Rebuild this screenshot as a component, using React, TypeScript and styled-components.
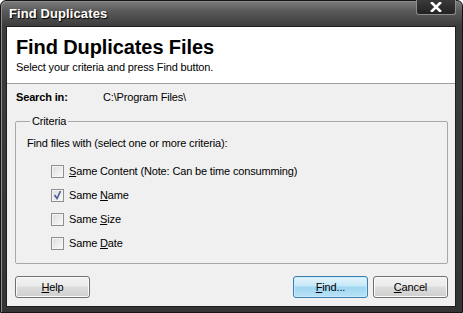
import styled, { createGlobalStyle } from "styled-components";

const GlobalStyle = createGlobalStyle`
  html, body {
    margin: 0;
    padding: 0;
    background: #ffffff;
  }
  body {
    font-family: "Liberation Sans", Arial, sans-serif;
    font-size: 11px;
    letter-spacing: -0.15px;
    color: #000;
  }
`;

// 바깥 창 틀 (어두운 Vista basic 프레임)
const Window = styled.div`
  width: 463px;
  height: 313px;
  box-sizing: border-box;
  display: flex;
  flex-direction: column;
  border: 1px solid #151515;
  border-radius: 6px 6px 0 0;
  background: linear-gradient(
    to bottom,
    #7c7c7c 0px,
    #5a5a5a 10px,
    #3c3c3c 25px,
    #343434 100%
  );
  box-shadow: inset 1px 1px 0 #8a8a8a;
`;

const TitleBar = styled.div`
  height: 25px;
  display: flex;
  justify-content: space-between;
  align-items: flex-start;
  padding-left: 8px;
  padding-right: 6px;
`;

const TitleText = styled.div`
  margin-top: 5px;
  font-size: 13px;
  font-weight: bold;
  color: #ffffff;
  text-shadow: 1px 1px 1px #000;
  letter-spacing: 0.1px;
`;

const CloseButton = styled.div`
  width: 40px;
  height: 15px;
  box-sizing: border-box;
  margin-top: -1px;
  border: 1px solid #8c8c8c;
  border-top: none;
  border-radius: 0 0 3px 3px;
  background: linear-gradient(to bottom, #3a3a3a, #222222);
  display: flex;
  align-items: center;
  justify-content: center;
`;

// 흰 머리글 + 회색 본문
const Client = styled.div`
  flex: 1;
  margin: 0 6px 5px 5px;
  display: flex;
  flex-direction: column;
  background: #f0f0f0;
  border: 1px solid #1e1e1e;
`;

const Header = styled.div`
  height: 57px;
  background: #ffffff;
  border-bottom: 1px solid #a0a0a0;
  padding: 8px 0 0 9px;
  box-sizing: border-box;
`;

const HeaderTitle = styled.div`
  font-size: 20px;
  line-height: 24px;
  font-weight: bold;
  letter-spacing: -0.1px;
`;

const HeaderSub = styled.div`
  margin-top: 2px;
  font-size: 11px;
  line-height: 13px;
`;

const Body = styled.div`
  flex: 1;
  display: flex;
  flex-direction: column;
  padding: 7px 7px 0 8px;
`;

const SearchRow = styled.div`
  display: flex;
  line-height: 13px;
  padding-left: 1px;
`;

const SearchLabel = styled.div`
  width: 87px;
  font-weight: bold;
`;

const GroupBox = styled.fieldset`
  margin: 11px 0 0 0;
  padding: 9px 10px 11px 11px;
  border: 1px solid #a8a8a8;
  border-radius: 2px;
  height: 149px;
  box-sizing: border-box;
`;

const GroupLegend = styled.legend`
  padding: 0 2px;
  margin-left: 3px;
  line-height: 13px;
`;

const Intro = styled.div`
  line-height: 13px;
  margin-bottom: 9px;
`;

const OptionRow = styled.label`
  display: flex;
  align-items: center;
  gap: 5px;
  height: 24px;
  padding-left: 24px;
`;

const Box = styled.span`
  width: 13px;
  height: 13px;
  box-sizing: border-box;
  border: 1px solid #8e8f8f;
  background: linear-gradient(135deg, #dcdcdc 0%, #f4f4f4 80%, #fbfbfb 100%);
  box-shadow: inset 0 0 0 1px #f4f4f4;
  display: flex;
  align-items: center;
  justify-content: center;
`;

const ButtonRow = styled.div`
  display: flex;
  align-items: center;
  gap: 5px;
  margin-top: 12px;
`;

const Spacer = styled.div`
  flex: 1;
`;

const Button = styled.div<{ $default?: boolean }>`
  width: 75px;
  height: 22px;
  box-sizing: border-box;
  border: 1px solid ${(p) => (p.$default ? "#3c7fb1" : "#707070")};
  border-radius: 3px;
  display: flex;
  align-items: center;
  justify-content: center;
  font-size: 11px;
  box-shadow: inset 0 0 0 1px ${(p) => (p.$default ? "#c8ecfc" : "#fbfbfb")};
  background: ${(p) =>
    p.$default
      ? "linear-gradient(to bottom, #e5f4fc 0%, #c6e8f8 45%, #9fd6f2 50%, #b8e2f7 100%)"
      : "linear-gradient(to bottom, #f2f2f2 0%, #ebebeb 45%, #dddddd 50%, #cfcfcf 100%)"};
`;

const options = [
  { key: "S", rest: "ame Content (Note: Can be time consumming)", pre: "", checked: false },
  { key: "N", rest: "ame", pre: "Same ", checked: true },
  { key: "S", rest: "ize", pre: "Same ", checked: false },
  { key: "D", rest: "ate", pre: "Same ", checked: false },
];

function App() {
  return (
    <>
      <GlobalStyle />
      <Window>
        <TitleBar>
          <TitleText>Find Duplicates</TitleText>
          <CloseButton>
            <svg width="14" height="10" viewBox="0 0 14 10">
              <path
                d="M3 1 L11 9 M11 1 L3 9"
                stroke="#ffffff"
                strokeWidth="2.6"
                strokeLinecap="square"
              />
            </svg>
          </CloseButton>
        </TitleBar>
        <Client>
          <Header>
            <HeaderTitle>Find Duplicates Files</HeaderTitle>
            <HeaderSub>Select your criteria and press Find button.</HeaderSub>
          </Header>
          <Body>
            <SearchRow>
              <SearchLabel>Search in:</SearchLabel>
              <div>C:\Program Files\</div>
            </SearchRow>
            <GroupBox>
              <GroupLegend>Criteria</GroupLegend>
              <Intro>Find files with (select one or more criteria):</Intro>
              {options.map((o, i) => (
                <OptionRow key={i}>
                  <Box>
                    {o.checked && (
                      <svg width="9" height="10" viewBox="0 0 9 10">
                        <path
                          d="M1.5 5 L4 8.5 L7.5 1"
                          stroke="#4a5d9a"
                          strokeWidth="1.6"
                          fill="none"
                        />
                      </svg>
                    )}
                  </Box>
                  <span>
                    {o.pre}
                    <u>{o.key}</u>
                    {o.rest}
                  </span>
                </OptionRow>
              ))}
            </GroupBox>
            <ButtonRow>
              <Button>
                <span>
                  <u>H</u>elp
                </span>
              </Button>
              <Spacer />
              <Button $default>
                <span>
                  <u>F</u>ind...
                </span>
              </Button>
              <Button>
                <span>
                  <u>C</u>ancel
                </span>
              </Button>
            </ButtonRow>
          </Body>
        </Client>
      </Window>
    </>
  );
}

export default App;
